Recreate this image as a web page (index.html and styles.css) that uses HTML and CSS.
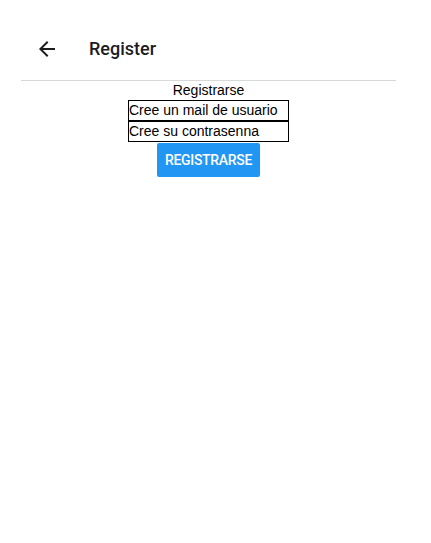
FILE: index.html
```html
<!DOCTYPE html>
<html lang="es">
<head>
<meta charset="utf-8">
<title>Register</title>
<link rel="stylesheet" href="styles.css">
</head>
<body>
<div class="frame">
  <header class="header">
    <button class="back" aria-label="Back">
      <svg width="24" height="24" viewBox="0 0 24 24"><path d="M20 11H7.83l5.59-5.59L12 4l-8 8 8 8 1.41-1.41L7.83 13H20v-2z" fill="#1c1c1e"/></svg>
    </button>
    <h1 class="title">Register</h1>
  </header>
  <main class="content">
    <div class="label">Registrarse</div>
    <div class="field">Cree un mail de usuario</div>
    <div class="field">Cree su contrasenna</div>
    <button class="submit">REGISTRARSE</button>
  </main>
</div>
</body>
</html>
```
FILE: styles.css
```css
html, body {
  margin: 0;
  padding: 0;
  background: #ffffff;
}
.frame {
  margin-left: 21px;
  width: 375px;
  font-family: "Liberation Sans", Arial, sans-serif;
}
.header {
  height: 81px;
  box-sizing: border-box;
  border-bottom: 1px solid #d8d8d8;
  display: flex;
  align-items: center;
  padding-top: 17px;
}
.back {
  width: 24px;
  height: 24px;
  padding: 0;
  margin: 0 30px 0 14px;
  border: none;
  background: none;
  display: flex;
}
.title {
  margin: 0;
  font-family: Roboto, "Liberation Sans", sans-serif;
  font-size: 18px;
  font-weight: 500;
  color: #1c1c1e;
}
.content {
  display: flex;
  flex-direction: column;
  align-items: center;
}
.label {
  font-size: 14px;
  line-height: 19px;
  color: #000;
}
.field {
  width: 161px;
  height: 21px;
  box-sizing: border-box;
  border: 1px solid #000;
  font-size: 14px;
  line-height: 19px;
  color: #000;
  text-align: left;
}
.submit {
  margin-top: 1px;
  background: #2196f3;
  color: #fff;
  border: none;
  border-radius: 2px;
  padding: 8px 8px;
  font-family: Roboto, "Liberation Sans", sans-serif;
  font-size: 14px;
  font-weight: 500;
  letter-spacing: -0.3px;
  line-height: 18px;
}
```
